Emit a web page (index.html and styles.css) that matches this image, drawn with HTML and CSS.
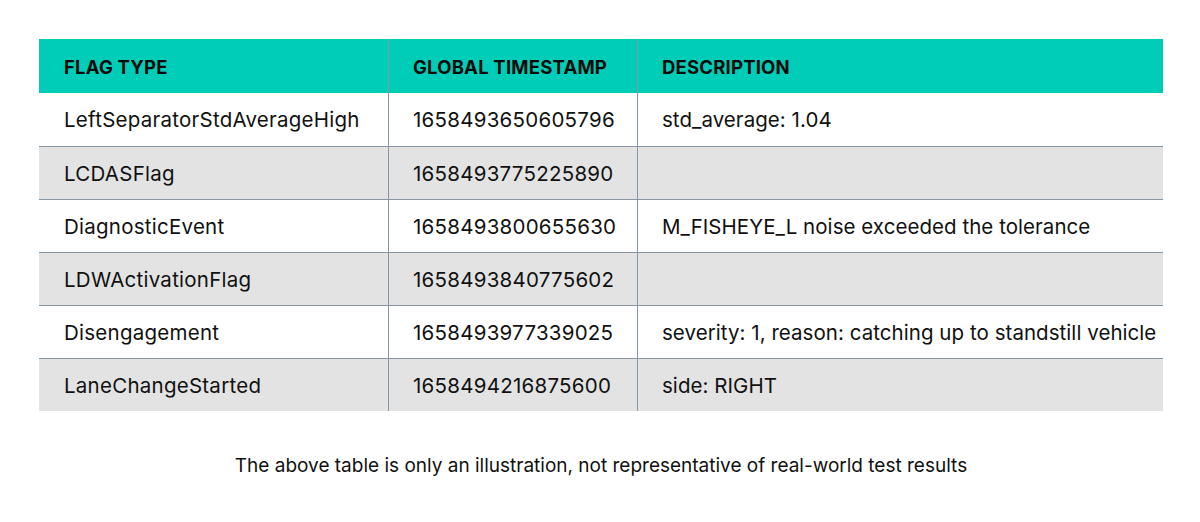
FILE: index.html
```html
<!DOCTYPE html>
<html lang="en">
<head>
<meta charset="utf-8">
<title>Flags table</title>
<link rel="stylesheet" href="styles.css">
</head>
<body>
<main class="page">
  <div class="table-wrap">
    <table class="flags">
      <colgroup>
        <col class="c1">
        <col class="c2">
        <col class="c3">
      </colgroup>
      <thead>
        <tr>
          <th>FLAG TYPE</th>
          <th>GLOBAL TIMESTAMP</th>
          <th>DESCRIPTION</th>
        </tr>
      </thead>
      <tbody>
        <tr><td>LeftSeparatorStdAverageHigh</td><td>1658493650605796</td><td class="desc">std_average: 1.04</td></tr>
        <tr><td>LCDASFlag</td><td>1658493775225890</td><td class="desc"></td></tr>
        <tr><td>DiagnosticEvent</td><td>1658493800655630</td><td class="desc">M_FISHEYE_L noise exceeded the tolerance</td></tr>
        <tr><td>LDWActivationFlag</td><td>1658493840775602</td><td class="desc"></td></tr>
        <tr><td>Disengagement</td><td>1658493977339025</td><td class="desc">severity: 1, reason: catching up to standstill vehicle</td></tr>
        <tr><td>LaneChangeStarted</td><td>1658494216875600</td><td class="desc">side: RIGHT</td></tr>
      </tbody>
    </table>
  </div>
  <p class="caption">The above table is only an illustration, not representative of real-world test results</p>
</main>
</body>
</html>
```

FILE: styles.css
```css
* { box-sizing: border-box; }
html, body { margin: 0; padding: 0; background: #fff; }
body {
  font-family: Inter, "Noto Sans", "DejaVu Sans", sans-serif;
  color: #111;
}
.page {
  width: 1200px;
  height: 522px;
  padding: 39px 37px 0 39px;
  display: flex;
  flex-direction: column;
}
.table-wrap {
  width: 1124px;
  overflow: hidden;
}
.flags {
  border-collapse: separate;
  border-spacing: 0;
  table-layout: fixed;
  width: 1124px;
}
.c1 { width: 349px; }
.c2 { width: 249px; }
.flags th, .flags td {
  text-align: left;
  white-space: nowrap;
  padding: 0 0 0 24px;
  vertical-align: middle;
}
.flags th:first-child, .flags td:first-child { padding-left: 25px; }
.flags th + th, .flags td + td { border-left: 1px solid #8797a5; }
.flags thead th {
  background: #00cdb8;
  height: 54px;
  font-weight: 700;
  font-size: 18.5px;
  letter-spacing: 0.2px;
  color: #0a0a0a;
  padding-top: 1px;
}
.flags tbody td {
  height: 53px;
  font-size: 20.5px;
  letter-spacing: 0.25px;
  font-weight: 400;
  padding-top: 0;
}
.flags tbody td.desc { letter-spacing: 0.05px; padding-right: 0; }
.flags tbody tr + tr td { border-top: 1px solid #8797a5; }
.flags tbody tr:nth-child(even) td { background: #e3e3e3; }
.caption {
  margin: 43px 0 0 0;
  width: 1124px;
  text-align: center;
  font-size: 19px;
  color: #111;
}
```
